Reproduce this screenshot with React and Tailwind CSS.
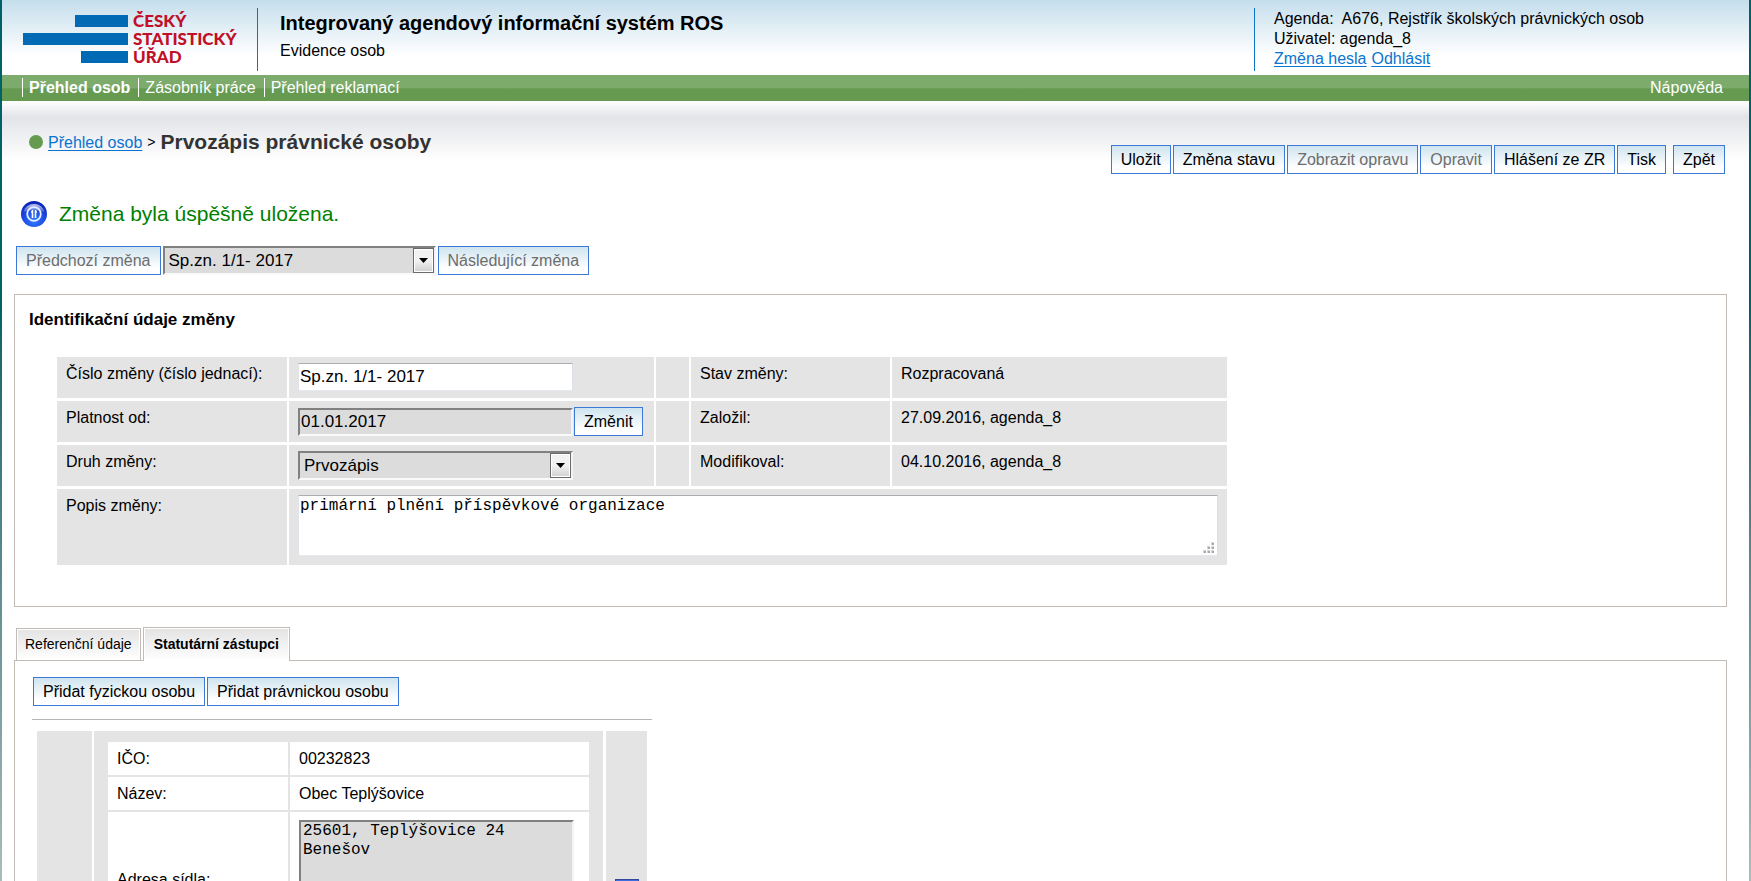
const BTN =
  'h-[29px] whitespace-nowrap border border-[#3b78d8] bg-linear-to-b from-[#cfe4ef] to-white to-80% px-[9px] text-[16px] leading-[27px] text-black disabled:text-[#6d6d6d]';

function Button({ children, disabled, id }) {
  return (
    <button type="button" id={id} disabled={disabled} className={BTN}>
      {children}
    </button>
  );
}

function Select({ id, label, value, className }) {
  return (
    <span className={'relative inline-flex h-[29px] ' + className}>
      <select
        id={id}
        aria-label={label}
        className="h-full w-full appearance-none border-2 border-t-[#808080] border-r-[#f4f4f4] border-b-[#fafafa] border-l-[#808080] bg-[#dcdcdc] pl-[4px] text-[17px] leading-[25px] text-black"
      >
        <option>{value}</option>
      </select>
      <span className="pointer-events-none absolute top-[2px] right-[2px] flex h-[25px] w-[21px] items-center justify-center border border-[#6b6b6b] bg-linear-to-b from-[#f2f2f2] from-50% to-[#d0d0d0] shadow-[inset_0_0_0_1px_#fff]">
        <svg width="9" height="5" viewBox="0 0 9 5" aria-hidden="true">
          <path d="M0 0h9L4.500 5z" fill="#000" />
        </svg>
      </span>
    </span>
  );
}

function Logo() {
  return (
    <svg className="overflow-visible" width="216" height="58" viewBox="0 -4 216 58" role="img" aria-label="Český statistický úřad">
      <g fill="#006bb4">
        <rect x="52" y="3" width="53" height="12" />
        <rect x="0" y="21" width="105" height="12" />
        <rect x="58" y="39" width="47" height="12" />
      </g>
      <g fill="#c10f27" fontFamily="Lato, sans-serif" fontWeight="900" fontSize="17">
        <text x="110" y="15">ČESKÝ</text>
        <text x="110" y="33">STATISTICKÝ</text>
        <text x="110" y="51">ÚŘAD</text>
      </g>
    </svg>
  );
}

function InfoIcon() {
  return (
    <svg width="26" height="26" viewBox="0 0 26 26" aria-hidden="true">
      <defs>
        <radialGradient id="ball" cx="0.5" cy="0.75" r="0.75">
          <stop offset="0" stopColor="#2f7bff" />
          <stop offset="0.500" stopColor="#1f4fe6" />
          <stop offset="1" stopColor="#0b1fb0" />
        </radialGradient>
        <linearGradient id="gloss" x1="0" y1="0" x2="0" y2="1">
          <stop offset="0" stopColor="#fff" stopOpacity="0.75" />
          <stop offset="1" stopColor="#fff" stopOpacity="0.15" />
        </linearGradient>
      </defs>
      <circle cx="13" cy="13" r="13" fill="url(#ball)" />
      <path d="M2.500 11a10.700 10 0 0 1 21 0q-10.500-4-21 0z" fill="url(#gloss)" />
      <circle cx="13" cy="13" r="6.800" fill="none" stroke="#e6eeff" strokeWidth="1.800" />
      <path d="M11.500 9v8M14.500 9v8M10 11h1.500M14.500 11h1.500" fill="none" stroke="#fff" strokeWidth="1.600" />
    </svg>
  );
}

function Header() {
  return (
    <header className="flex h-[75px] items-start bg-linear-to-b from-[#c5deec] to-white to-[56px]">
      <div className="w-[255px] shrink-0 pt-[8px] pl-[21px]">
        <Logo />
      </div>
      <div className="mt-2 h-[63px] flex-1 border-l border-[#0b74c4] pl-[22px]">
        <div className="text-[20px] leading-[30px] font-bold">Integrovaný agendový informační systém ROS</div>
        <div className="text-[16px] leading-[26px]">Evidence osob</div>
      </div>
      <div className="mt-2 h-[63px] w-[495px] border-l border-[#0b74c4] pt-px pl-[19px] text-[16px] leading-[20px]">
        <div>Agenda:&nbsp; A676, Rejstřík školských právnických osob</div>
        <div>Uživatel: agenda_8</div>
        <div className="flex gap-[5px] text-[#0b74d0] underline underline-offset-2">
          <a href="#heslo">Změna hesla</a>
          <a href="#odhlasit">Odhlásit</a>
        </div>
      </div>
    </header>
  );
}

function Nav() {
  const item = 'border-l border-white pr-[8px] pl-[6px] leading-[19px]';
  return (
    <nav className="flex h-[26px] items-center justify-between bg-linear-to-b from-[#7dab6b] from-48% to-[#659a50] to-54% pr-[26px] pb-px pl-[20px] text-[16px] text-white">
      <div className="flex">
        <a href="#osoby" className={item + ' font-bold'}>Přehled osob</a>
        <a href="#prace" className={item}>Zásobník práce</a>
        <a href="#reklamace" className={item}>Přehled reklamací</a>
      </div>
      <a href="#napoveda" className="leading-[19px]">Nápověda</a>
    </nav>
  );
}

const CELL = 'bg-[#e4e4e4] px-[9px] align-top text-[16px]';
const LABEL = CELL + ' pt-[7px] leading-[20px]';
const VALUE = CELL + ' pt-[6px]';

function ChangeTable() {
  return (
    <table className="mt-[22px] ml-[40px] w-[1174px] table-fixed border-separate border-spacing-x-[2px] border-spacing-y-[3px]">
      <colgroup>
        <col className="w-[230px]" />
        <col className="w-[365px]" />
        <col className="w-[33px]" />
        <col className="w-[199px]" />
        <col />
      </colgroup>
      <tbody>
        <tr className="h-[41px]">
          <td className={LABEL}><label htmlFor="cislo">Číslo změny (číslo jednací):</label></td>
          <td className={VALUE}>
            <input
              id="cislo"
              type="text"
              defaultValue="Sp.zn. 1/1- 2017"
              className="block h-[28px] w-[275px] border border-t-[#abadb3] border-r-[#dbdfe6] border-b-[#e3e9ef] border-l-[#e2e3ea] bg-white px-px text-[17px]"
            />
          </td>
          <td className={CELL} />
          <td className={LABEL}>Stav změny:</td>
          <td className={LABEL}>Rozpracovaná</td>
        </tr>
        <tr className="h-[41px]">
          <td className={LABEL}><label htmlFor="platnost">Platnost od:</label></td>
          <td className={VALUE}>
            <div className="flex items-center gap-[1px]">
              <input
                id="platnost"
                type="text"
                readOnly
                defaultValue="01.01.2017"
                className="h-[28px] w-[275px] border-2 border-t-[#808080] border-r-[#f4f4f4] border-b-[#fafafa] border-l-[#808080] bg-[#dcdcdc] px-px text-[17px]"
              />
              <Button>Změnit</Button>
            </div>
          </td>
          <td className={CELL} />
          <td className={LABEL}>Založil:</td>
          <td className={LABEL}>27.09.2016, agenda_8</td>
        </tr>
        <tr className="h-[41px]">
          <td className={LABEL}><label htmlFor="druh">Druh změny:</label></td>
          <td className={VALUE}>
            <Select id="druh" value="Prvozápis" className="w-[275px] align-top" />
          </td>
          <td className={CELL} />
          <td className={LABEL}>Modifikoval:</td>
          <td className={LABEL}>04.10.2016, agenda_8</td>
        </tr>
        <tr className="h-[76px]">
          <td className={LABEL}><label htmlFor="popis">Popis změny:</label></td>
          <td className={VALUE} colSpan={4}>
            <div className="relative">
              <textarea
                id="popis"
                defaultValue="primární plnění příspěvkové organizace"
                className="block h-[61px] w-full resize-none border border-t-[#abadb3] border-r-[#dbdfe6] border-b-[#e3e9ef] border-l-[#e2e3ea] bg-white px-px font-['Liberation_Mono',monospace] text-[16px] leading-[20px]"
              />
              <svg className="pointer-events-none absolute right-1 bottom-[3px]" width="11" height="11" aria-hidden="true">
                <path d="M8 0h3v3H8zM4 4h3v3H4zM8 4h3v3H8zM0 8h3v3H0zM4 8h3v3H4zM8 8h3v3H8z" fill="#d6d6d6" />
                <path d="M9 1h2v2H9zM5 5h2v2H5zM9 5h2v2H9zM1 9h2v2H1zM5 9h2v2H5zM9 9h2v2H9z" fill="#a8a8a8" />
              </svg>
            </div>
          </td>
        </tr>
      </tbody>
    </table>
  );
}

function PersonTable() {
  const cell = 'bg-white px-[9px] text-[16px]';
  return (
    <div className="ml-[5px] flex w-[610px]">
      <div className="w-[55px] bg-[#e4e4e4]" />
      <div className="ml-[2px] flex-1 bg-[#e4e4e4] px-[12px] pt-[9px]">
        <table className="w-full table-fixed border-separate border-spacing-[2px]">
          <colgroup>
            <col className="w-[180px]" />
            <col />
          </colgroup>
          <tbody>
            <tr className="h-[33px]">
              <td className={cell}>IČO:</td>
              <td className={cell}>00232823</td>
            </tr>
            <tr className="h-[33px]">
              <td className={cell}>Název:</td>
              <td className={cell}>Obec Teplýšovice</td>
            </tr>
            <tr className="h-[135px]">
              <td className={cell}><label htmlFor="adresa">Adresa sídla:</label></td>
              <td className={cell + ' pt-[8px] align-top'}>
                <textarea
                  id="adresa"
                  readOnly
                  defaultValue={'25601, Teplýšovice 24\nBenešov'}
                  className="block h-[119px] w-[275px] resize-none border-2 border-t-[#808080] border-r-[#f4f4f4] border-b-[#fafafa] border-l-[#808080] bg-[#dcdcdc] px-[2px] font-['Liberation_Mono',monospace] text-[16px] leading-[19px]"
                />
              </td>
            </tr>
          </tbody>
        </table>
      </div>
      <div className="ml-[3px] flex w-[41px] items-center justify-center bg-[#e4e4e4]">
        <button type="button" aria-label="Upravit" className="mt-[102px] h-6 w-6 border border-[#33489c] bg-[#3b6fe0]" />
      </div>
    </div>
  );
}

export default function App() {
  return (
    <div className="flex h-screen overflow-hidden bg-linear-to-b from-[#006266] from-35% to-[#a9bcbb] px-[2px] font-['Liberation_Sans',Arial,sans-serif] text-black">
      <div className="min-w-0 flex-1 bg-white">
        <Header />
        <Nav />
        <main className="bg-[linear-gradient(to_bottom,#ffffff_0px,#e3e4e8_16px,#ffffff_60px)] pr-[22px] pl-[12px] pt-[25px]">
          <div className="flex h-[48px] items-start justify-between pl-[15px]">
            <div className="flex items-center gap-[5px]">
              <span className="h-[14px] w-[14px] rounded-full bg-[#659a50]" />
              <a href="#osoby" className="pt-px text-[16px] text-[#0b74d0] underline underline-offset-2">Přehled osob</a>
              <span className="pt-px text-[14px]">&gt;</span>
              <h1 className="text-[21px] leading-[32px] font-bold text-[#333]">Prvozápis právnické osoby</h1>
            </div>
            <div className="mt-[19px] mr-[2px] flex gap-[2px]">
              <Button>Uložit</Button>
              <Button>Změna stavu</Button>
              <Button disabled>Zobrazit opravu</Button>
              <Button disabled>Opravit</Button>
              <Button>Hlášení ze ZR</Button>
              <Button>Tisk</Button>
              <span className="ml-[5px] flex"><Button>Zpět</Button></span>
            </div>
          </div>

          <div role="status" className="mt-[26px] flex items-center gap-[12px] pl-[7px] text-[21px] leading-[28px] text-[#008000]">
            <InfoIcon />
            Změna byla úspěšně uložena.
          </div>

          <div className="mt-[18px] flex gap-[2px] pl-[2px]">
            <Button disabled>Předchozí změna</Button>
            <Select id="zmena" label="Změna" value="Sp.zn. 1/1- 2017" className="w-[273px]" />
            <Button disabled>Následující změna</Button>
          </div>

          <section className="mt-[19px] border border-[#c2bbb5] pb-[38px]">
            <h2 className="pt-[12px] pl-[14px] text-[17px] leading-[25px] font-bold">Identifikační údaje změny</h2>
            <ChangeTable />
          </section>

          <div className="mt-[20px] flex items-end pl-[2px] text-[14px]" role="tablist">
            <button type="button" role="tab" aria-selected="false" className="h-[32px] border border-b-0 border-[#c2bbb5] bg-linear-to-b from-[#e3e3e3] to-white px-[8px] shadow-[inset_0_0_0_1px_#fff]">
              Referenční údaje
            </button>
            <button type="button" role="tab" aria-selected="true" className="relative -mb-px ml-[2px] h-[34px] border border-b-0 border-[#c2bbb5] bg-linear-to-b from-[#e3e3e3] to-white px-[10px] font-bold shadow-[inset_0_0_0_1px_#fff]">
              Statutární zástupci
            </button>
          </div>
          <section className="border border-[#c2bbb5] px-[17px] pt-[16px]">
            <div className="flex gap-[2px] pl-px">
              <Button>Přidat fyzickou osobu</Button>
              <Button>Přidat právnickou osobu</Button>
            </div>
            <hr className="mt-[13px] mb-[11px] w-[620px] border-[#b5b5b5]" />
            <PersonTable />
          </section>
        </main>
      </div>
    </div>
  );
}
